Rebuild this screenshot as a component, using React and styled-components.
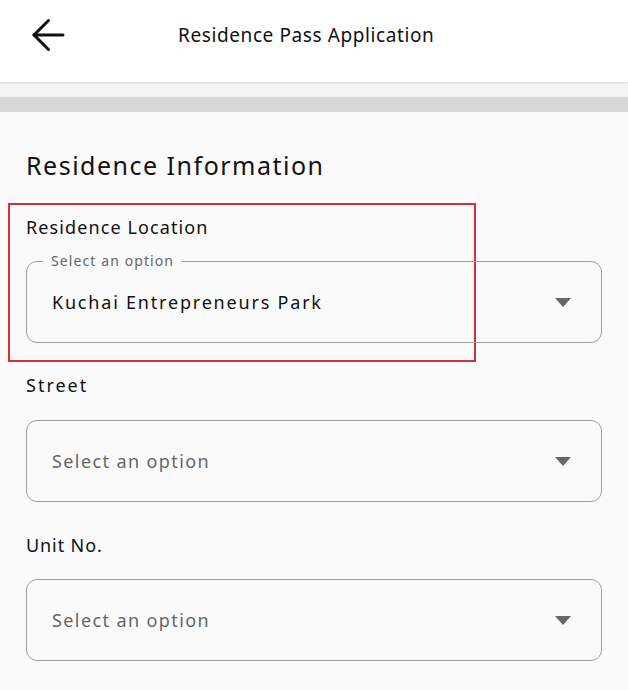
import React from "react";
import styled, { createGlobalStyle } from "styled-components";

const Global = createGlobalStyle`
  html, body { margin: 0; padding: 0; background: #fafafa; }
  body { font-family: "Noto Sans", "Open Sans", sans-serif; color: #111; }
`;

const Page = styled.div`
  width: 628px;
  min-height: 690px;
  background: #fafafa;
  display: flex;
  flex-direction: column;
`;

const Header = styled.header`
  height: 82px;
  background: #fff;
  display: flex;
  align-items: center;
  position: relative;
  z-index: 1;
  box-shadow: 0 1px 3px rgba(0, 0, 0, 0.12);
`;

const BackButton = styled.button`
  border: 0;
  background: transparent;
  padding: 0;
  margin-left: 31px;
  width: 34px;
  height: 34px;
  display: flex;
  align-items: center;
  justify-content: center;
  margin-top: -12px;
`;

const Title = styled.h1`
  margin: -12px 0 0 113px;
  font-size: 19px;
  font-weight: 400;
  letter-spacing: 0.6px;
`;

const Spacer = styled.div`
  height: 15px;
  background: #f4f4f4;
`;

const Divider = styled.div`
  height: 15px;
  background: #d7d7d7;
`;

const Content = styled.main`
  padding: 36px 26px 0 26px;
  display: flex;
  flex-direction: column;
`;

const SectionTitle = styled.h2`
  margin: 0 0 21px 0;
  font-size: 25px;
  font-weight: 400;
  line-height: 34px;
  letter-spacing: 1.5px;
`;

const Highlight = styled.div`
  margin: 0 0 0 -18px;
  width: 468px;
  box-sizing: border-box;
  border: 2px solid #d2303a;
  padding: 8px 0 17px 16px;
`;

const HighlightInner = styled.div`
  width: 576px;
`;

const Field = styled.div`
  display: flex;
  flex-direction: column;
  margin-top: ${(p) => p.$mt || 0}px;
`;

const Label = styled.label`
  font-size: 18px;
  line-height: 28px;
  letter-spacing: ${(p) => p.$ls ?? 1.1}px;
  margin-bottom: ${(p) => p.$gap}px;
`;

const Select = styled.div`
  position: relative;
  height: 82px;
  box-sizing: border-box;
  border: 1.5px solid #a0a0a0;
  border-radius: 11px;
  display: flex;
  align-items: center;
  padding: 0 30px 0 25px;
`;

const Legend = styled.span`
  position: absolute;
  top: -10px;
  left: 16px;
  padding: 0 8px;
  background: #fafafa;
  font-size: 14px;
  line-height: 18px;
  color: #666;
  letter-spacing: 1.1px;
`;

const Value = styled.span`
  flex: 1;
  font-size: 18px;
  letter-spacing: ${(p) => (p.$placeholder ? 1.4 : 1.8)}px;
  color: ${(p) => (p.$placeholder ? "#666" : "#111")};
`;

const Arrow = () => (
  <svg width="16" height="9" viewBox="0 0 16 9">
    <path d="M0 0 L16 0 L8 9 Z" fill="#666" />
  </svg>
);

const BackIcon = () => (
  <svg width="34" height="34" viewBox="0 0 34 34" fill="none" stroke="#111" strokeWidth="3" strokeLinecap="round" strokeLinejoin="round">
    <path d="M32 17H3" />
    <path d="M17.5 2.5L3 17L17.5 31.5" />
  </svg>
);

export default function App() {
  return (
    <Page>
      <Global />
      <Header>
        <BackButton aria-label="Back">
          <BackIcon />
        </BackButton>
        <Title>Residence Pass Application</Title>
      </Header>
      <Spacer />
      <Divider />
      <Content>
        <SectionTitle>Residence Information</SectionTitle>
        <Highlight>
          <HighlightInner>
            <Field>
              <Label $gap={20}>Residence Location</Label>
              <Select>
                <Legend>Select an option</Legend>
                <Value>Kuchai Entrepreneurs Park</Value>
                <Arrow />
              </Select>
            </Field>
          </HighlightInner>
        </Highlight>
        <Field $mt={9}>
          <Label $gap={21} $ls={2}>Street</Label>
          <Select>
            <Value $placeholder>Select an option</Value>
            <Arrow />
          </Select>
        </Field>
        <Field $mt={29}>
          <Label $gap={20} $ls={0.9}>Unit No.</Label>
          <Select>
            <Value $placeholder>Select an option</Value>
            <Arrow />
          </Select>
        </Field>
      </Content>
    </Page>
  );
}
